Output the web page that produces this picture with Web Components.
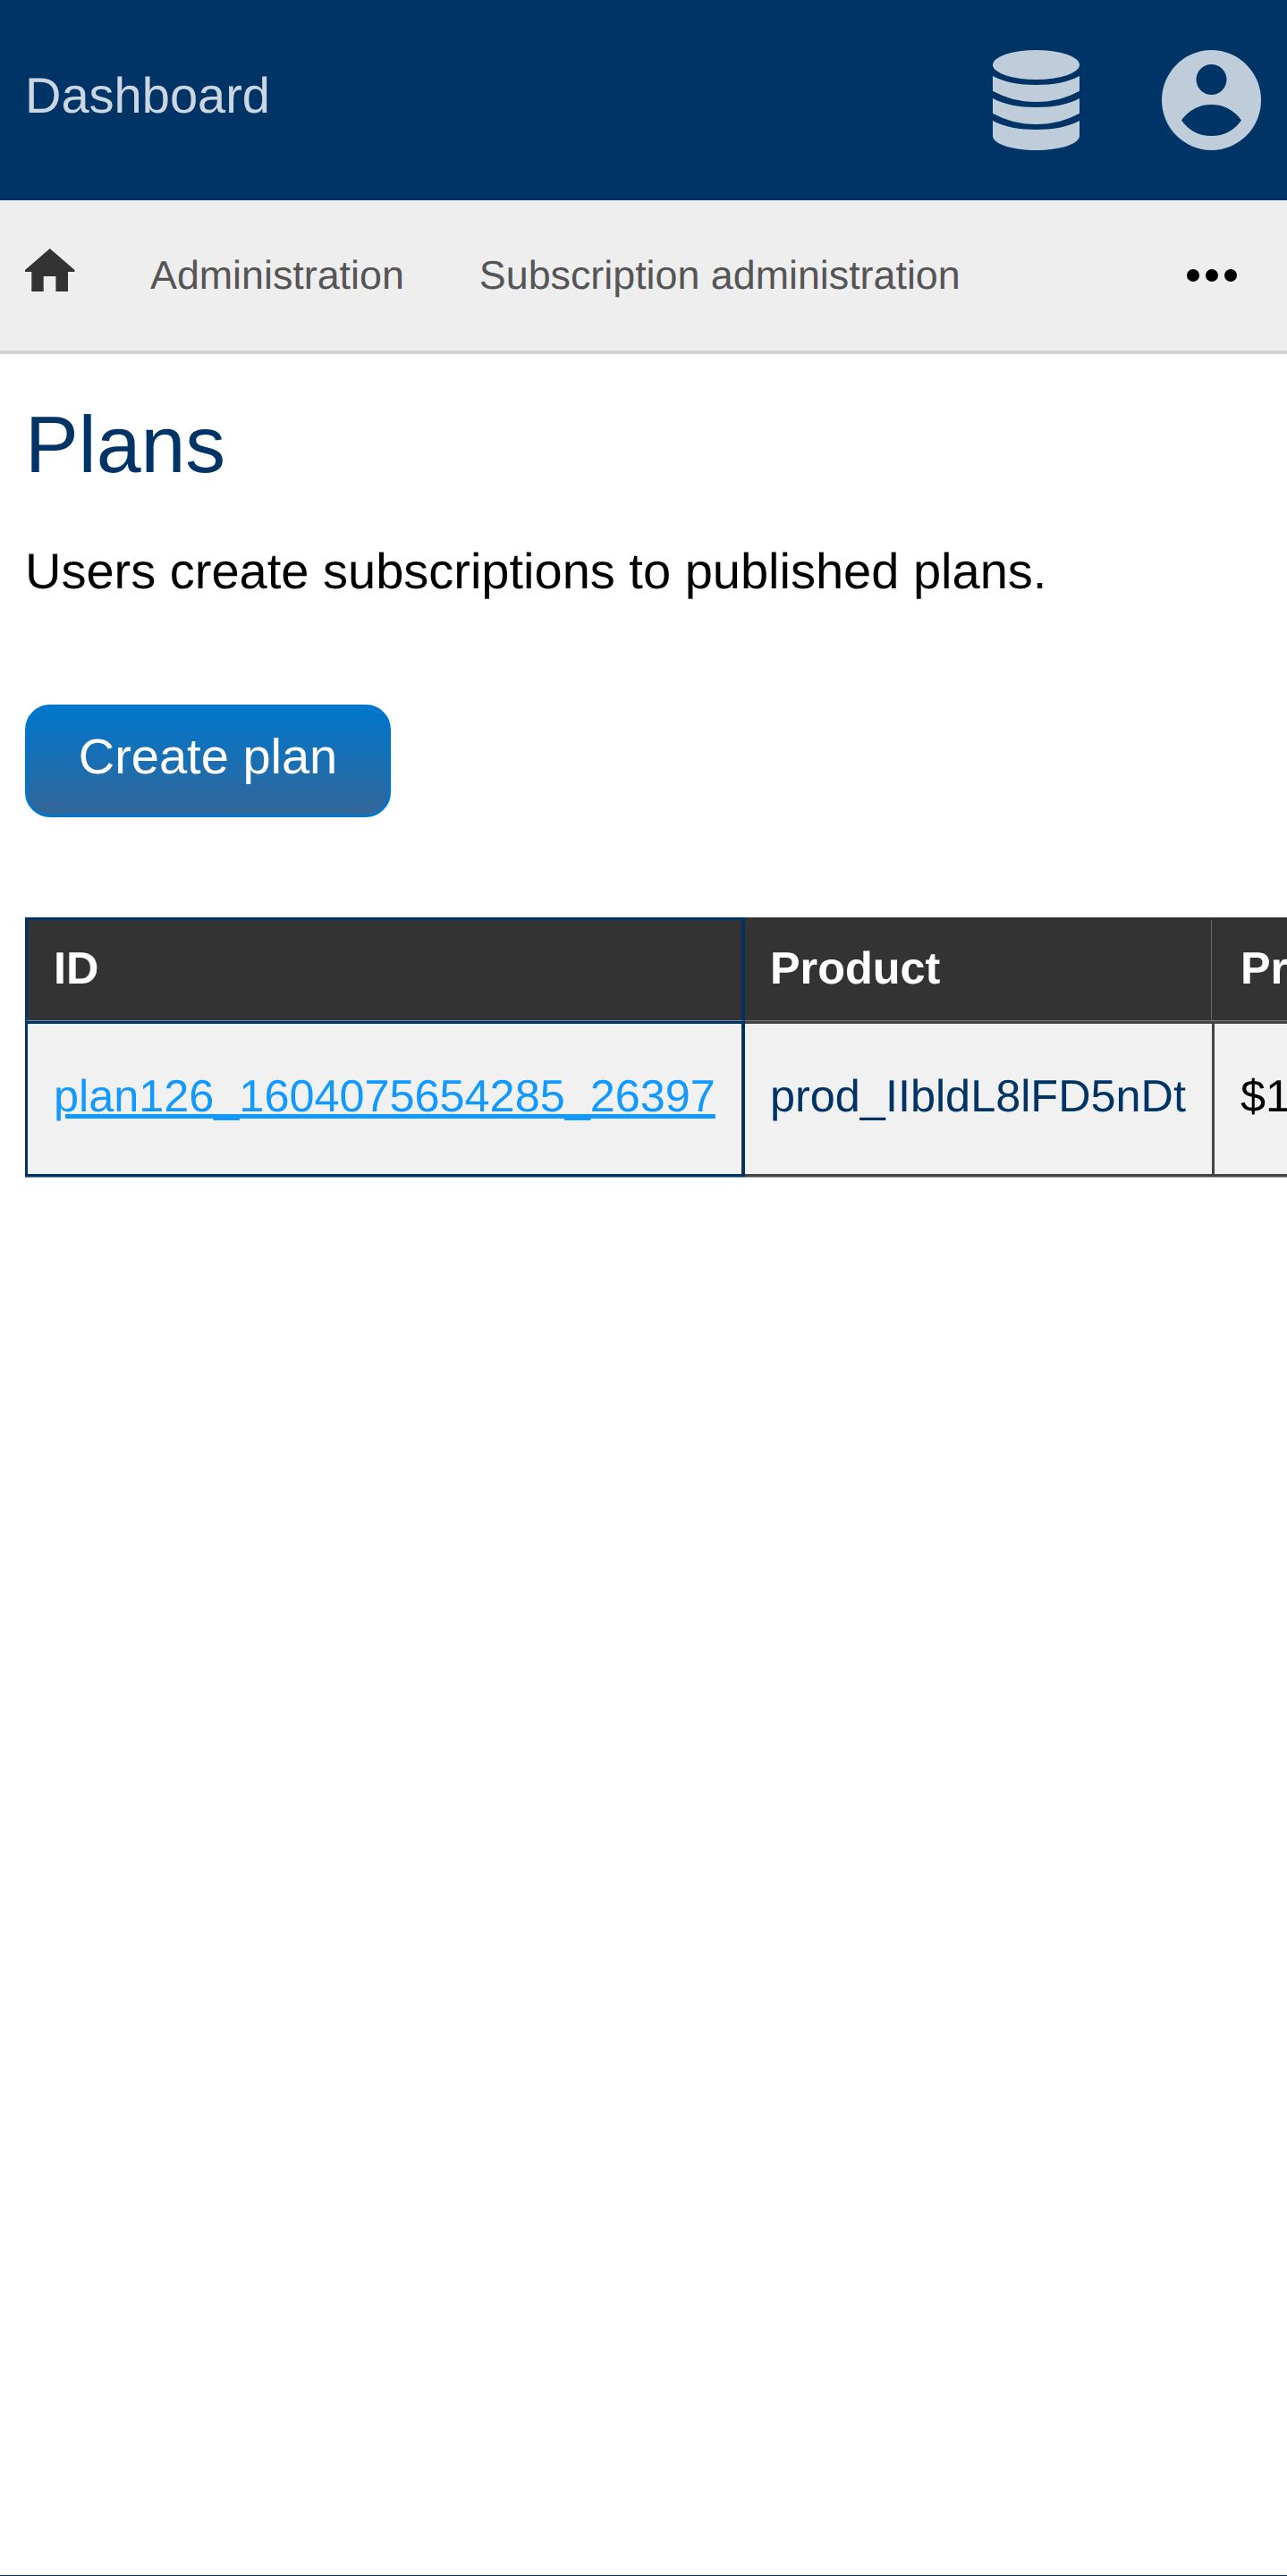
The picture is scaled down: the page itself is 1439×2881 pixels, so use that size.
<!DOCTYPE html>
<html lang="en">
<head>
<meta charset="utf-8">
<title>Plans</title>
<style>
  html, body { margin: 0; padding: 0; height: 100%; background: #fff; }
  body { font-family: "Liberation Sans", Arial, sans-serif; overflow: hidden; text-rendering: geometricPrecision; }
</style>
</head>
<body>
<plans-app>
  <site-header slot="header" title="Dashboard"></site-header>
  <bread-crumbs slot="nav">
    <a href="#">Administration</a>
    <a href="#">Subscription administration</a>
  </bread-crumbs>
  <page-intro heading="Plans">Users create subscriptions to published plans.</page-intro>
  <action-button>Create plan</action-button>
  <plans-table></plans-table>
</plans-app>

<script>
/**
 * Outer page frame: header, nav, content and the thin footer line
 */
class PlansApp extends HTMLElement {
  constructor() {
    super();
    this.attachShadow({ mode: 'open' });
    this.shadowRoot.innerHTML = `
      <style>
        :host {
          display: flex;
          flex-direction: column;
          height: 2881px;
        }
        main {
          flex: 1;
          min-width: 0;
          padding: 0 0 0 28px;
          overflow: hidden;
        }
        footer {
          height: 1px;
          background: #003366;
        }
      </style>
      <slot name="header"></slot>
      <slot name="nav"></slot>
      <main><slot></slot></main>
      <footer></footer>
    `;
  }
}

class SiteHeader extends HTMLElement {
  constructor() {
    super();
    this.attachShadow({ mode: 'open' });
  }

  connectedCallback() {
    this.shadowRoot.innerHTML = `
      <style>
        :host {
          display: flex;
          align-items: center;
          height: 224px;
          padding: 0 29px 0 28px;
          box-sizing: border-box;
          background: #003366;
        }
        .title {
          flex: 1;
          font-size: 56px;
          color: #ccd6e0;
          position: relative;
          top: -6px;
        }
        svg { display: block; fill: #bfccd9; }
        .db { margin-right: 92px; }
      </style>
      <span class="title">${this.getAttribute('title')}</span>
      <svg class="db" width="97" height="112" viewBox="0 0 97 112">
        <ellipse cx="48.5" cy="16.5" rx="48.5" ry="16.5"/>
        <path d="M0 29C13 36 30 39 48.5 39S84 36 97 29V45.7C84 53 67 58 48.5 58S13 53 0 45.7Z"/>
        <path d="M0 54C13 61 30 64 48.5 64S84 61 97 54V70.7C84 78 67 83 48.5 83S13 78 0 70.7Z"/>
        <path d="M0 79C13 86 30 89 48.5 89S84 86 97 79V96C97 105 75 112 48.5 112S0 105 0 96Z"/>
      </svg>
      <svg width="111" height="112" viewBox="0 0 111 112">
        <path fill-rule="evenodd" d="M55.5 0A55.5 56 0 1 0 55.5 112A55.5 56 0 1 0 55.5 0ZM55.5 16A17 17 0 1 1 55.5 50A17 17 0 1 1 55.5 16ZM22 78.5C30 67 42 61 55.5 61S81 67 89 78.5C81 90 70 96 55.5 96S30 90 22 78.5Z"/>
      </svg>
    `;
  }
}

class BreadCrumbs extends HTMLElement {
  constructor() {
    super();
    this.attachShadow({ mode: 'open' });
    this.shadowRoot.innerHTML = `
      <style>
        :host {
          display: flex;
          align-items: center;
          height: 172px;
          padding: 0 56px 0 28px;
          box-sizing: border-box;
          background: #eeeeee;
          border-bottom: 4px solid #d3d3d3;
          font-size: 44.8px;
        }
        .home { display: block; fill: #333333; margin-right: 84px; position: relative; top: -6px; }
        .links { flex: 1; display: flex; gap: 84px; }
        ::slotted(a) { color: #555555; text-decoration: none; }
        .more { display: flex; gap: 7px; }
        .more i { width: 14px; height: 14px; border-radius: 50%; background: #000; }
      </style>
      <svg class="home" width="56" height="48" viewBox="0 0 56 48">
        <path d="M27.75 0L55.5 24V26H48V48H34.4V31H20.7V48H7.3V26H0V24Z"/>
      </svg>
      <div class="links"><slot></slot></div>
      <div class="more"><i></i><i></i><i></i></div>
    `;
  }
}

class PageIntro extends HTMLElement {
  constructor() {
    super();
    this.attachShadow({ mode: 'open' });
  }

  connectedCallback() {
    this.shadowRoot.innerHTML = `
      <style>
        :host { display: block; }
        h1 {
          margin: 0;
          padding-top: 50px;
          font-size: 89.6px;
          font-weight: normal;
          line-height: 103px;
          color: #003366;
        }
        p {
          margin: 0;
          padding-top: 58px;
          font-size: 56px;
          line-height: 64px;
          color: #000;
        }
      </style>
      <h1>${this.getAttribute('heading')}</h1>
      <p><slot></slot></p>
    `;
  }
}

class ActionButton extends HTMLElement {
  constructor() {
    super();
    this.attachShadow({ mode: 'open' });
    this.shadowRoot.innerHTML = `
      <style>
        :host {
          display: block;
          width: fit-content;
          margin-top: 117px;
        }
        button {
          display: block;
          width: 409px;
          height: 126px;
          padding: 0 0 12px;
          box-sizing: border-box;
          border: 3px solid #0077cc;
          border-radius: 28px;
          background: linear-gradient(#0077cc, #336699);
          color: #fff;
          font: inherit;
          font-size: 56px;
        }
      </style>
      <button type="button"><slot></slot></button>
    `;
  }
}

class PlansTable extends HTMLElement {
  constructor() {
    super();
    this.attachShadow({ mode: 'open' });
    this.shadowRoot.innerHTML = `
      <style>
        :host {
          display: block;
          margin-top: 112px;
          padding-bottom: 4px;
          overflow: hidden;
        }
        table {
          border-collapse: separate;
          border-spacing: 0;
          table-layout: fixed;
          width: 1700px;
          font-size: 50.4px;
        }
        col.a { width: 805px; }
        col.b { width: 525px; }
        th, td {
          box-sizing: border-box;
          padding: 0 0 0 29px;
          text-align: left;
          white-space: nowrap;
          border-style: solid;
          border-width: 0;
        }
        th {
          height: 116px;
          background: #333333;
          color: #fff;
          font-weight: bold;
          border-top: 3px solid #333333;
          border-bottom: 1px solid #777777;
          padding-bottom: 6px;
        }
        th:nth-child(2) { box-shadow: inset -3px 0 0 #333333, inset -4px 0 0 #666666; }
        td {
          height: 174px;
          background: #f1f1f1;
          color: #000;
          border-top: 3px solid #444444;
          border-bottom: 3px solid #444444;
          border-right: 3px solid #444444;
          box-shadow: 0 1px 0 #999999;
          padding-bottom: 8px;
        }
        .first {
          border-left: 3px solid #003366;
          border-right: 4px solid #003366;
        }
        th.first { border-top-color: #003366; border-bottom-color: #6a8aaa; }
        td.first { border-top-color: #003366; border-bottom-color: #003366; box-shadow: 0 1px 0 #6a8aaa; }
        th:nth-child(2), td:nth-child(2) { padding-left: 28px; }
        td.product { color: #003366; }
        a { color: #1199ff; }
      </style>
      <table>
        <colgroup><col class="a"><col class="b"><col></colgroup>
        <thead>
          <tr><th class="first">ID</th><th>Product</th><th>Price</th></tr>
        </thead>
        <tbody>
          <tr>
            <td class="first"><a href="#">plan126_1604075654285_26397</a></td>
            <td class="product">prod_IIbldL8lFD5nDt</td>
            <td>$10.00</td>
          </tr>
        </tbody>
      </table>
    `;
  }
}

customElements.define('plans-app', PlansApp);
customElements.define('site-header', SiteHeader);
customElements.define('bread-crumbs', BreadCrumbs);
customElements.define('page-intro', PageIntro);
customElements.define('action-button', ActionButton);
customElements.define('plans-table', PlansTable);
</script>
</body>
</html>
